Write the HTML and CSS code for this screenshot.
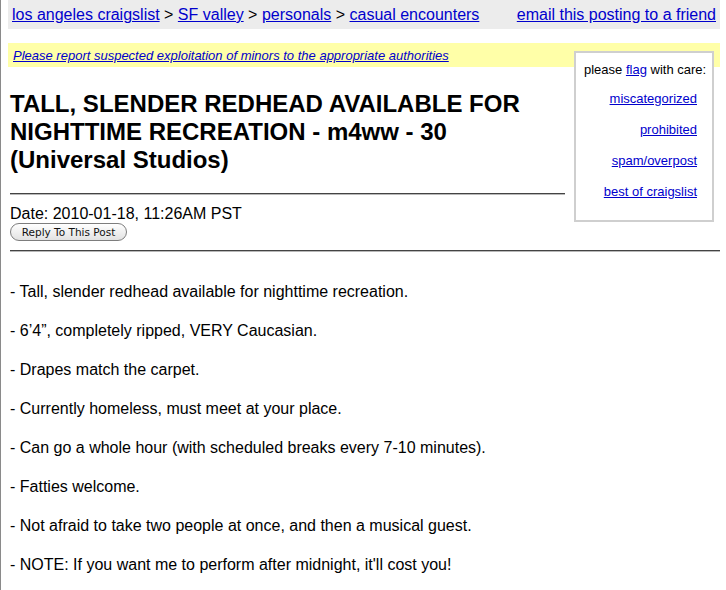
FILE: index.html
```html
<!DOCTYPE html>
<html>
<head>
<meta charset="utf-8">
<title>casual encounters</title>
<link rel="stylesheet" href="styles.css">
</head>
<body>
<div class="topbar">
  <div class="crumbs"><a href="#">los angeles craigslist</a> &gt; <a href="#">SF valley</a> &gt; <a href="#">personals</a> &gt; <a href="#">casual encounters</a></div>
  <a href="#" class="email">email this posting to a friend</a>
</div>
<div class="flags">
  <div class="flag-head">please <a href="#">flag</a> with care:</div>
  <a href="#">miscategorized</a>
  <a href="#">prohibited</a>
  <a href="#">spam/overpost</a>
  <a href="#">best of craigslist</a>
</div>
<div class="warning"><a href="#">Please report suspected exploitation of minors to the appropriate authorities</a></div>
<h2 class="title">TALL, SLENDER REDHEAD AVAILABLE FOR NIGHTTIME RECREATION - m4ww - 30 (Universal Studios)</h2>
<hr class="rule">
<div class="date">Date: 2010-01-18, 11:26AM PST</div>
<button class="reply">Reply To This Post</button>
<hr class="rule full">
<div class="body">
  <p>- Tall, slender redhead available for nighttime recreation.</p>
  <p>- 6’4”, completely ripped, VERY Caucasian.</p>
  <p>- Drapes match the carpet.</p>
  <p>- Currently homeless, must meet at your place.</p>
  <p>- Can go a whole hour (with scheduled breaks every 7-10 minutes).</p>
  <p>- Fatties welcome.</p>
  <p>- Not afraid to take two people at once, and then a musical guest.</p>
  <p>- NOTE: If you want me to perform after midnight, it'll cost you!</p>
</div>
</body>
</html>
```
FILE: styles.css
```css
html {
  border-left: 1px solid #8a8a8a;
  background: #fff;
}
body {
  margin: 0 6px 0 7px;
  font-family: "Liberation Sans", Arial, sans-serif;
  color: #000;
  font-size: 16px;
}
a {
  color: #0000cc;
  text-decoration: underline;
}
.topbar {
  background: #ececec;
  height: 29px;
  line-height: 29px;
  padding: 0 4px 0 4px;
  display: flex;
  justify-content: space-between;
  font-size: 16px;
}
.flags {
  float: right;
  width: 136px;
  margin: 22px 6px 0 9px;
  border: 2px solid #cfcfcf;
  background: #fff;
  padding: 7px 0 18px 0;
  font-size: 13px;
  display: flex;
  flex-direction: column;
  align-items: flex-end;
  gap: 11px;
}
.flags a {
  line-height: 20px;
  margin-right: 15px;
}
.flags .flag-head {
  align-self: flex-start;
  padding-left: 8px;
  line-height: 20px;
  margin-bottom: -2px;
}
.flags .flag-head a {
  margin: 0;
}
.warning {
  background: #ffffa8;
  margin-top: 14px;
  height: 24px;
  line-height: 25px;
  padding-left: 5px;
  font-size: 13px;
  font-style: italic;
}
.title {
  margin: 23px 0 0 2px;
  font-size: 24px;
  line-height: 28px;
  font-weight: bold;
}
.rule {
  overflow: hidden;
  margin: 19px 0 0 2px;
  height: 0;
  border: 0;
  border-top: 1px solid #444;
  border-bottom: 1px solid #b8b8b8;
}
.date {
  margin: 9px 0 0 2px;
  line-height: 19px;
}
.reply {
  display: block;
  margin: 0 0 0 2px;
  width: 117px;
  height: 18px;
  padding: 0;
  border: 1px solid #7d7d7d;
  border-radius: 9px;
  background: linear-gradient(#ffffff, #f0f0f0 50%, #e2e2e2);
  font-family: "DejaVu Sans", sans-serif;
  font-size: 10.5px;
  color: #111;
  line-height: 16px;
}
.full {
  margin-top: 9px;
}
.body {
  margin: 30px 0 0 2px;
}
.body p {
  margin: 0 0 20px 0;
  line-height: 19px;
}
```
